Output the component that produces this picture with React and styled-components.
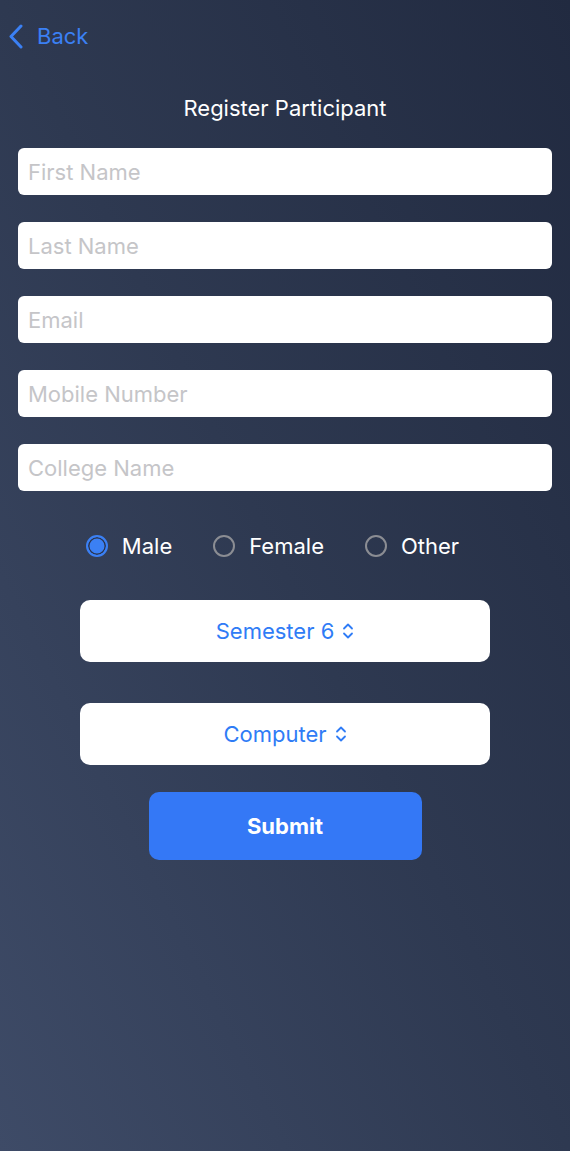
import styled, { createGlobalStyle } from 'styled-components';
import { useState } from 'react';

const GlobalStyle = createGlobalStyle`
  * {
    box-sizing: border-box;
  }
  body {
    margin: 0;
    font-family: Inter, "Noto Sans", sans-serif;
  }
`;

const fields = [
  'First Name',
  'Last Name',
  'Email',
  'Mobile Number',
  'College Name',
];

const genders = ['Male', 'Female', 'Other'];

export default function App() {
  const [gender, setGender] = useState('Male');

  return (
    <>
      <GlobalStyle />
      <Page>
        <BackLink type="button">
          <svg width="17" height="25" viewBox="0 0 17 25">
            <path
              d="M13 2 L3 12.5 L13 23"
              fill="none"
              stroke="currentColor"
              strokeWidth="3"
              strokeLinecap="round"
              strokeLinejoin="round"
            />
          </svg>
          Back
        </BackLink>

        <Title>Register Participant</Title>

        <Form onSubmit={(event) => event.preventDefault()}>
          {fields.map((field) => (
            <Input key={field} type="text" placeholder={field} />
          ))}

          <RadioRow>
            {genders.map((option) => (
              <RadioOption key={option} onClick={() => setGender(option)}>
                <RadioDot checked={gender === option} />
                {option}
              </RadioOption>
            ))}
          </RadioRow>

          <Picker type="button">
            Semester 6 <UpDown />
          </Picker>
          <Picker type="button" $spaced>
            Computer <UpDown />
          </Picker>

          <SubmitButton type="submit">Submit</SubmitButton>
        </Form>
      </Page>
    </>
  );
}

function UpDown() {
  return (
    <svg width="12" height="18" viewBox="0 0 12 18">
      <path
        d="M2 6.5 L6 2.5 L10 6.5 M2 11.5 L6 15.5 L10 11.5"
        fill="none"
        stroke="currentColor"
        strokeWidth="1.8"
        strokeLinecap="round"
        strokeLinejoin="round"
      />
    </svg>
  );
}

const Page = styled.div`
  min-height: 1151px;
  display: flex;
  flex-direction: column;
  padding: 22px 18px 0 18px;
  background: linear-gradient(to top right, #3e4b67 0%, #2e3951 50%, #212a40 100%);
`;

const BackLink = styled.button`
  display: flex;
  align-items: center;
  gap: 12px;
  align-self: flex-start;
  margin-left: -10px;
  padding: 0;
  height: 28px;
  border: none;
  background: none;
  color: #3b80f4;
  font-family: Inter, "Noto Sans", sans-serif;
  font-size: 22px;
  cursor: pointer;
`;

const Title = styled.h1`
  margin: 45px 0 0;
  text-align: center;
  color: #ffffff;
  font-size: 22px;
  line-height: 26px;
  font-weight: 400;
`;

const Form = styled.form`
  display: flex;
  flex-direction: column;
  align-items: center;
  margin-top: 27px;
`;

const Input = styled.input`
  width: 100%;
  height: 47px;
  margin-bottom: 27px;
  padding: 1px 10px 0;
  border: none;
  border-radius: 6px;
  background: #ffffff;
  font-family: Inter, "Noto Sans", sans-serif;
  font-size: 22px;
  color: #222;
  outline: none;

  &::placeholder {
    color: #c5c5c8;
  }

  &:nth-of-type(5) {
    margin-bottom: 0;
  }
`;

const RadioRow = styled.div`
  display: flex;
  justify-content: center;
  align-items: center;
  gap: 41px;
  height: 30px;
  margin-top: 40px;
  padding-right: 25px;
`;

const RadioOption = styled.label`
  display: flex;
  align-items: center;
  gap: 14px;
  color: #ffffff;
  font-size: 22px;
  cursor: pointer;
`;

const RadioDot = styled.span`
  width: 22px;
  height: 22px;
  border-radius: 50%;
  border: 2px solid ${({ checked }) => (checked ? '#3b80f4' : '#8b8d93')};
  background: ${({ checked }) => (checked ? '#3b80f4' : 'transparent')};
  box-shadow: ${({ checked }) =>
    checked ? 'inset 0 0 0 1.5px #2b3550' : 'none'};
`;

const Picker = styled.button`
  display: flex;
  align-items: center;
  justify-content: center;
  gap: 8px;
  width: 410px;
  height: 62px;
  margin-top: ${({ $spaced }) => ($spaced ? '41px' : '39px')};
  border: none;
  border-radius: 10px;
  background: #ffffff;
  color: #2f7cf6;
  font-family: Inter, "Noto Sans", sans-serif;
  font-size: 22px;
  cursor: pointer;
`;

const SubmitButton = styled.button`
  width: 273px;
  height: 68px;
  margin-top: 27px;
  border: none;
  border-radius: 10px;
  background: #3478f6;
  color: #ffffff;
  font-family: Inter, "Noto Sans", sans-serif;
  font-size: 22px;
  font-weight: 700;
  cursor: pointer;
`;
